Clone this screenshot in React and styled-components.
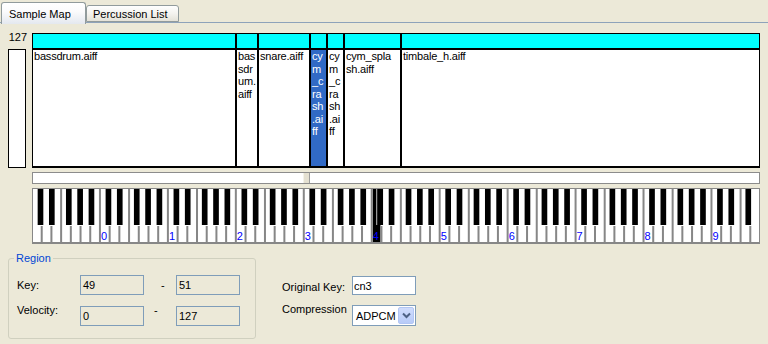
import React from 'react';
import styled, { createGlobalStyle } from 'styled-components';

const Global = createGlobalStyle`
  html, body { margin: 0; padding: 0; background: #ece9d8; }
  body { font-family: "Liberation Sans", Arial, sans-serif; font-size: 11px; color: #000; }
`;

const Page = styled.div`
  width: 768px;
  height: 344px;
  overflow: hidden;
  background: #ece9d8;
  display: flex;
  flex-direction: column;
`;

const TabStrip = styled.div`
  display: flex;
  align-items: flex-start;
  height: 22px;
  padding-left: 1px;
  border-bottom: 1px solid #8ea3ba;
  flex-shrink: 0;
`;

const Tab = styled.div`
  box-sizing: border-box;
  width: ${p => p.$w}px;
  margin-top: ${p => (p.$active ? 2 : 5)}px;
  height: ${p => (p.$active ? 22 : 17)}px;
  padding: ${p => (p.$active ? '5px 0 0 7px' : '2px 0 0 6px')};
  line-height: 13px;
  white-space: nowrap;
  border: 1px solid #919b9c;
  border-bottom: ${p => (p.$active ? 'none' : '1px solid #919b9c')};
  border-radius: 3px 3px 0 0;
  background: ${p =>
    p.$active
      ? 'linear-gradient(#ffffff, #fbfbfc 40%, #e4e8ef)'
      : 'linear-gradient(#fefefe, #f4f3ef 50%, #e4e2d8)'};
  position: relative;
  z-index: ${p => (p.$active ? 2 : 1)};
`;

const MapRow = styled.div`
  display: flex;
  gap: 6px;
  padding-left: 8px;
  margin-top: 10px;
  height: 135px;
  flex-shrink: 0;
`;

const ScaleCol = styled.div`
  width: 18px;
  display: flex;
  flex-direction: column;
  margin-top: -2px;
`;

const ScaleLabel = styled.div`
  height: 18px;
  line-height: 13px;
  text-align: right;
  margin-right: -1px;
`;

const ScaleBox = styled.div`
  flex: 1;
  background: #fff;
  border: 1px solid #000;
`;

const SampleMap = styled.div`
  box-sizing: border-box;
  width: 728px;
  height: 135px;
  display: flex;
  border: 1px solid #000;
  border-bottom-width: 2px;
`;

const Column = styled.div`
  display: flex;
  flex-direction: column;
  width: ${p => (p.$w ? `${p.$w}px` : 'auto')};
  flex: ${p => (p.$w ? '0 0 auto' : '1 1 auto')};
  border-left: ${p => (p.$first ? 'none' : '2px solid #000')};
  overflow: hidden;
`;

const ColHead = styled.div`
  height: 14px;
  flex-shrink: 0;
  background: #00ffff;
  border-bottom: 2px solid #000;
`;

const ColBody = styled.div`
  flex: 1;
  padding-left: 1px;
  line-height: 12.5px;
  white-space: nowrap;
  letter-spacing: -0.2px;
  background: ${p => (p.$selected ? '#316ac5' : '#ffffff')};
  color: ${p => (p.$selected ? '#ffffff' : '#000000')};
`;

const Slider = styled.div`
  box-sizing: border-box;
  position: relative;
  width: 728px;
  height: 12px;
  margin: 4px 0 0 32px;
  background: #fff;
  border: 1px solid #8c8c8c;
  flex-shrink: 0;
`;

const Thumb = styled.div`
  position: absolute;
  top: 0;
  bottom: 0;
  width: 5px;
  background: #e4e0d1;
  border-right: 1px solid #9c9c9c;
  border-left: 1px solid #f4f2ea;
`;

const Keyboard = styled.svg`
  display: block;
  width: 728px;
  height: 56px;
  margin: 4px 0 0 32px;
  flex-shrink: 0;
`;

const Bottom = styled.div`
  display: flex;
  align-items: flex-start;
  padding-left: 8px;
  margin-top: 8px;
`;

const Group = styled.fieldset`
  box-sizing: border-box;
  width: 248px;
  margin: 0;
  padding: 10px 0 12px 8px;
  border: 1px solid #d0d0bf;
  border-radius: 3px;
  min-width: 0;
`;

const Legend = styled.legend`
  color: #0046d5;
  padding: 0 2px;
  margin-left: -3px;
  line-height: 13px;
`;

const RegionGrid = styled.div`
  display: grid;
  grid-template-columns: 63px 64px 32px 64px;
  grid-auto-rows: 20px;
  row-gap: 11px;
`;

const Label = styled.div`
  line-height: 13px;
  white-space: nowrap;
  align-self: ${p => (p.$top ? 'start' : 'center')};
  margin-top: ${p => p.$dy || 0}px;
`;

const Dash = styled.div`
  line-height: 13px;
  padding-left: ${p => p.$x}px;
  align-self: ${p => (p.$top ? 'start' : 'center')};
  margin-top: ${p => p.$dy || 0}px;
`;

const Field = styled.div`
  box-sizing: border-box;
  height: ${p => p.$h || 20}px;
  border: 1px solid #7f9db9;
  background: ${p => (p.$white ? '#ffffff' : '#ece9d8')};
  padding-left: ${p => (p.$white ? 1 : 2)}px;
  display: flex;
  align-items: center;
  white-space: nowrap;
`;

const Form = styled.div`
  display: grid;
  grid-template-columns: 70px 64px;
  grid-template-rows: 19px 21px;
  row-gap: 10px;
  margin: 24px 0 0 26px;
`;

const SelectBox = styled.div`
  box-sizing: border-box;
  height: 21px;
  border: 1px solid #7f9db9;
  background: #fff;
  display: flex;
  align-items: center;
  justify-content: space-between;
  padding-left: 3px;
  padding-right: 1px;
  white-space: nowrap;
`;

const DropButton = styled.div`
  box-sizing: border-box;
  width: 16px;
  height: 17px;
  flex-shrink: 0;
  border: 1px solid #b2c6f4;
  border-radius: 2px;
  background: linear-gradient(#cfdcfd, #b8cbf8);
  display: flex;
  align-items: center;
  justify-content: center;
`;

const columns = [
  { w: 202, lines: ['bassdrum.aiff'] },
  { w: 20, lines: ['bas', 'sdr', 'um.', 'aiff'] },
  { w: 50, lines: ['snare.aiff'] },
  { w: 15, lines: ['cy', 'm', '_c', 'ra', 'sh', '.ai', 'ff'], selected: true },
  { w: 15, lines: ['cy', 'm', '_c', 'ra', 'sh', '.ai', 'ff'] },
  { w: 55, lines: ['cym_spla', 'sh.aiff'] },
  { w: 0, lines: ['timbale_h.aiff'] },
];

const KW = 728 / 75;
const OCT = KW * 7;
const SEMI = OCT / 12;
const SEL_WHITE = 35;

function PianoKeys() {
  const seps = [];
  for (let i = 1; i < 75; i++) {
    const full = i % 7 === 0 || i % 7 === 3;
    seps.push(
      <rect key={'s' + i} x={i * KW - 1} y={full ? 0 : 38} width={2} height={full ? 56 : 18} fill="#878787" />
    );
  }
  const blacks = [];
  for (let o = 0; o <= 10; o++) {
    [1, 3, 6, 8, 10].forEach(s => {
      const midi = o * 12 + s;
      if (midi > 127) return;
      const x = o * OCT + s * SEMI;
      if (o === 5 && s === 1) {
        blacks.push(<rect key={'w' + midi} x={x - 1} y={0} width={1} height={37} fill="#ffffff" />);
      }
      blacks.push(<rect key={'b' + midi} x={x} y={0} width={SEMI} height={37} fill="#000" />);
    });
  }
  const labels = [];
  for (let n = 0; n <= 9; n++) {
    const x = (n + 1) * 7 * KW + 1;
    labels.push(
      <text key={'l' + n} x={x} y={52} fill="#0000ff" fontSize="11" fontFamily="Liberation Sans, Arial, sans-serif">
        {n}
      </text>
    );
  }
  return (
    <Keyboard viewBox="0 0 728 56">
      <rect x="0" y="0" width="728" height="56" fill="#fff" />
      <rect x={SEL_WHITE * KW + 1} y="0" width={KW - 2} height="56" fill="#000" />
      {seps}
      {blacks}
      {labels}
      <rect x="0.5" y="0.5" width="727" height="54" fill="none" stroke="#878787" strokeWidth="1" />
      <rect x="0" y="54" width="728" height="2" fill="#878787" />
    </Keyboard>
  );
}

export default function App() {
  return (
    <Page>
      <Global />
      <TabStrip>
        <Tab $active $w={85}>Sample Map</Tab>
        <Tab $w={93}>Percussion List</Tab>
      </TabStrip>

      <MapRow>
        <ScaleCol>
          <ScaleLabel>127</ScaleLabel>
          <ScaleBox />
        </ScaleCol>
        <SampleMap>
          {columns.map((c, i) => (
            <Column key={i} $w={c.w} $first={i === 0}>
              <ColHead />
              <ColBody $selected={c.selected}>
                {c.lines.map((l, j) => (
                  <div key={j}>{l}</div>
                ))}
              </ColBody>
            </Column>
          ))}
        </SampleMap>
      </MapRow>

      <Slider>
        <Thumb style={{ left: 270 }} />
      </Slider>

      <PianoKeys />

      <Bottom>
        <Group>
          <Legend>Region</Legend>
          <RegionGrid>
            <Label>Key:</Label>
            <Field>49</Field>
            <Dash $x={17}>-</Dash>
            <Field>51</Field>
            <Label $top $dy={-2}>Velocity:</Label>
            <Field>0</Field>
            <Dash $x={10} $top $dy={-2}>-</Dash>
            <Field>127</Field>
          </RegionGrid>
        </Group>
        <Form>
          <Label $dy={3}>Original Key:</Label>
          <Field $white $h={19}>cn3</Field>
          <Label $top $dy={-2}>Compression</Label>
          <SelectBox>
            <span>ADPCM</span>
            <DropButton>
              <svg width="9" height="7" viewBox="0 0 9 7">
                <path d="M1 1.5 L4.5 5 L8 1.5" fill="none" stroke="#4d6185" strokeWidth="2" />
              </svg>
            </DropButton>
          </SelectBox>
        </Form>
      </Bottom>
    </Page>
  );
}
